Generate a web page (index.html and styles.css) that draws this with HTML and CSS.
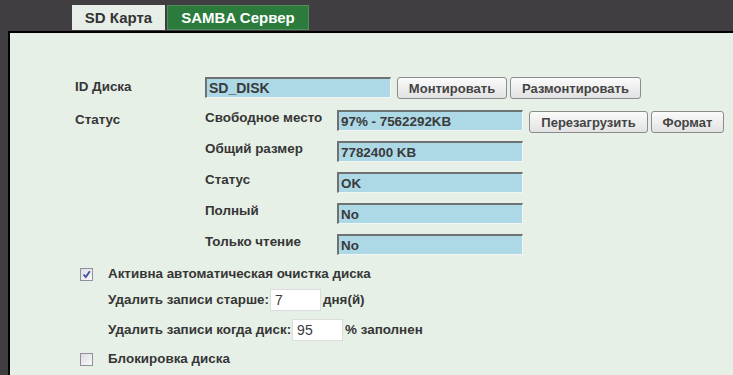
FILE: index.html
```html
<!DOCTYPE html>
<html lang="ru">
<head>
<meta charset="utf-8">
<title>SD</title>
<link rel="stylesheet" href="styles.css">
</head>
<body>
<div class="tabs">
  <div class="tab tab-light">SD Карта</div>
  <div class="tab tab-green">SAMBA Сервер</div>
</div>
<div class="panel">
  <div class="row">
    <div class="label">ID Диска</div>
    <input class="field field-id" type="text" value="SD_DISK" readonly>
    <button class="btn btn-mount">Монтировать</button>
    <button class="btn btn-unmount">Размонтировать</button>
  </div>
  <div class="row status">
    <div class="label">Статус</div>
    <div class="sub">
      <div class="subrow">
        <div class="sublabel">Свободное место</div>
        <input class="field" type="text" value="97% - 7562292KB" readonly>
        <button class="btn btn-reload">Перезагрузить</button>
        <button class="btn btn-format">Формат</button>
      </div>
      <div class="subrow">
        <div class="sublabel">Общий размер</div>
        <input class="field" type="text" value="7782400 KB" readonly>
      </div>
      <div class="subrow">
        <div class="sublabel">Статус</div>
        <input class="field" type="text" value="OK" readonly>
      </div>
      <div class="subrow">
        <div class="sublabel">Полный</div>
        <input class="field" type="text" value="No" readonly>
      </div>
      <div class="subrow">
        <div class="sublabel">Только чтение</div>
        <input class="field" type="text" value="No" readonly>
      </div>
    </div>
  </div>
  <div class="check-row check-first">
    <span class="cb"><svg width="9" height="9" viewBox="0 0 9 9"><path d="M1.5 4.5 L3.8 7 L7.8 1.2" fill="none" stroke="#3d4f9e" stroke-width="1.8"/></svg></span>
    <span class="text">Активна автоматическая очистка диска</span>
  </div>
  <div class="opt-row opt-first">
    <span class="text">Удалить записи старше:</span>
    <input class="small" type="text" value="7">
    <span class="text">дня(й)</span>
  </div>
  <div class="opt-row">
    <span class="text">Удалить записи когда диск:</span>
    <input class="small" type="text" value="95">
    <span class="text">% заполнен</span>
  </div>
  <div class="check-row check-last">
    <span class="cb"></span>
    <span class="text">Блокировка диска</span>
  </div>
</div>
</body>
</html>
```
FILE: styles.css
```css
html, body {
  margin: 0;
  padding: 0;
  background: #403e40;
  height: 375px;
  overflow: hidden;
  font-family: "Liberation Sans", Arial, sans-serif;
}
.tabs {
  display: flex;
  gap: 2px;
  padding: 5px 0 0 72px;
  height: 26px;
}
.tab {
  height: 25px;
  box-sizing: border-box;
  display: flex;
  align-items: center;
  justify-content: center;
  font-weight: bold;
  font-size: 15px;
}
.tab-light {
  width: 93px;
  background: #e7eee7;
  color: #333333;
}
.tab-green {
  width: 142px;
  background: #2b7c3c;
  border: 1px solid #4f8d5c;
  color: #ffffff;
}
.panel {
  margin-left: 8px;
  border-top: 2px solid #000000;
  border-left: 2px solid #000000;
  background: #e7f0e7;
  box-sizing: border-box;
  height: 344px;
  overflow: hidden;
  padding: 44px 0 0 65px;
  color: #363636;
  font-size: 13.4px;
  font-weight: bold;
}
.row {
  display: flex;
  align-items: flex-start;
}
.label {
  width: 130px;
  flex: none;
  padding-top: 2px;
  line-height: 16px;
}
.field {
  width: 186px;
  height: 21px;
  box-sizing: border-box;
  margin: 0;
  padding: 0 0 0 2px;
  background: #add8e6;
  border-top: 2px solid #6e7272;
  border-left: 2px solid #6e7272;
  border-right: 1px solid #f2f6f2;
  border-bottom: 1px solid #f2f6f2;
  font-family: "Liberation Sans", Arial, sans-serif;
  font-size: 13.4px;
  font-weight: bold;
  color: #3a3a3a;
  outline: none;
}
.field-id {
  font-size: 14px;
}
.btn {
  height: 22px;
  box-sizing: border-box;
  margin: 0;
  padding: 0;
  border: 1px solid #8c8c8c;
  border-radius: 3px;
  background: linear-gradient(#fbfbfb, #e2e2e2);
  font-family: "Liberation Sans", Arial, sans-serif;
  font-size: 13px;
  font-weight: bold;
  color: #444444;
}
.btn-mount { width: 110px; margin-left: 6px; }
.btn-unmount { width: 131px; margin-left: 3px; }
.btn-reload { width: 119px; margin-left: 6px; margin-top: 1px; }
.btn-format { width: 73px; margin-left: 3px; margin-top: 1px; }
.status {
  margin-top: 11px;
}
.sub {
  display: flex;
  flex-direction: column;
}
.subrow {
  display: flex;
  align-items: flex-start;
  height: 21px;
  margin-bottom: 10px;
}
.sublabel {
  width: 132px;
  flex: none;
  line-height: 16px;
}
.check-row {
  display: flex;
  align-items: center;
  padding-left: 5px;
  height: 18px;
}
.check-first { margin-top: 0; }
.check-last { margin-top: 9px; }
.cb {
  width: 13px;
  height: 13px;
  box-sizing: border-box;
  border: 1px solid #8f8f9f;
  background: linear-gradient(135deg, #dcdce2, #fbfbfb);
  display: flex;
  align-items: center;
  justify-content: center;
  margin-right: 15px;
  flex: none;
}
.cb svg { display: block; }
.text {
  line-height: 16px;
}
.opt-row {
  display: flex;
  align-items: center;
  padding-left: 33px;
  height: 22px;
  margin-top: 8px;
}
.opt-first { margin-top: 6px; }
.small {
  width: 51px;
  height: 22px;
  box-sizing: border-box;
  margin: 0 2px 0 1px;
  padding: 0 0 0 4px;
  background: #ffffff;
  border: 1px solid #dcdcdc;
  font-family: "Liberation Sans", Arial, sans-serif;
  font-size: 14px;
  color: #3a3a3a;
  outline: none;
}
```
